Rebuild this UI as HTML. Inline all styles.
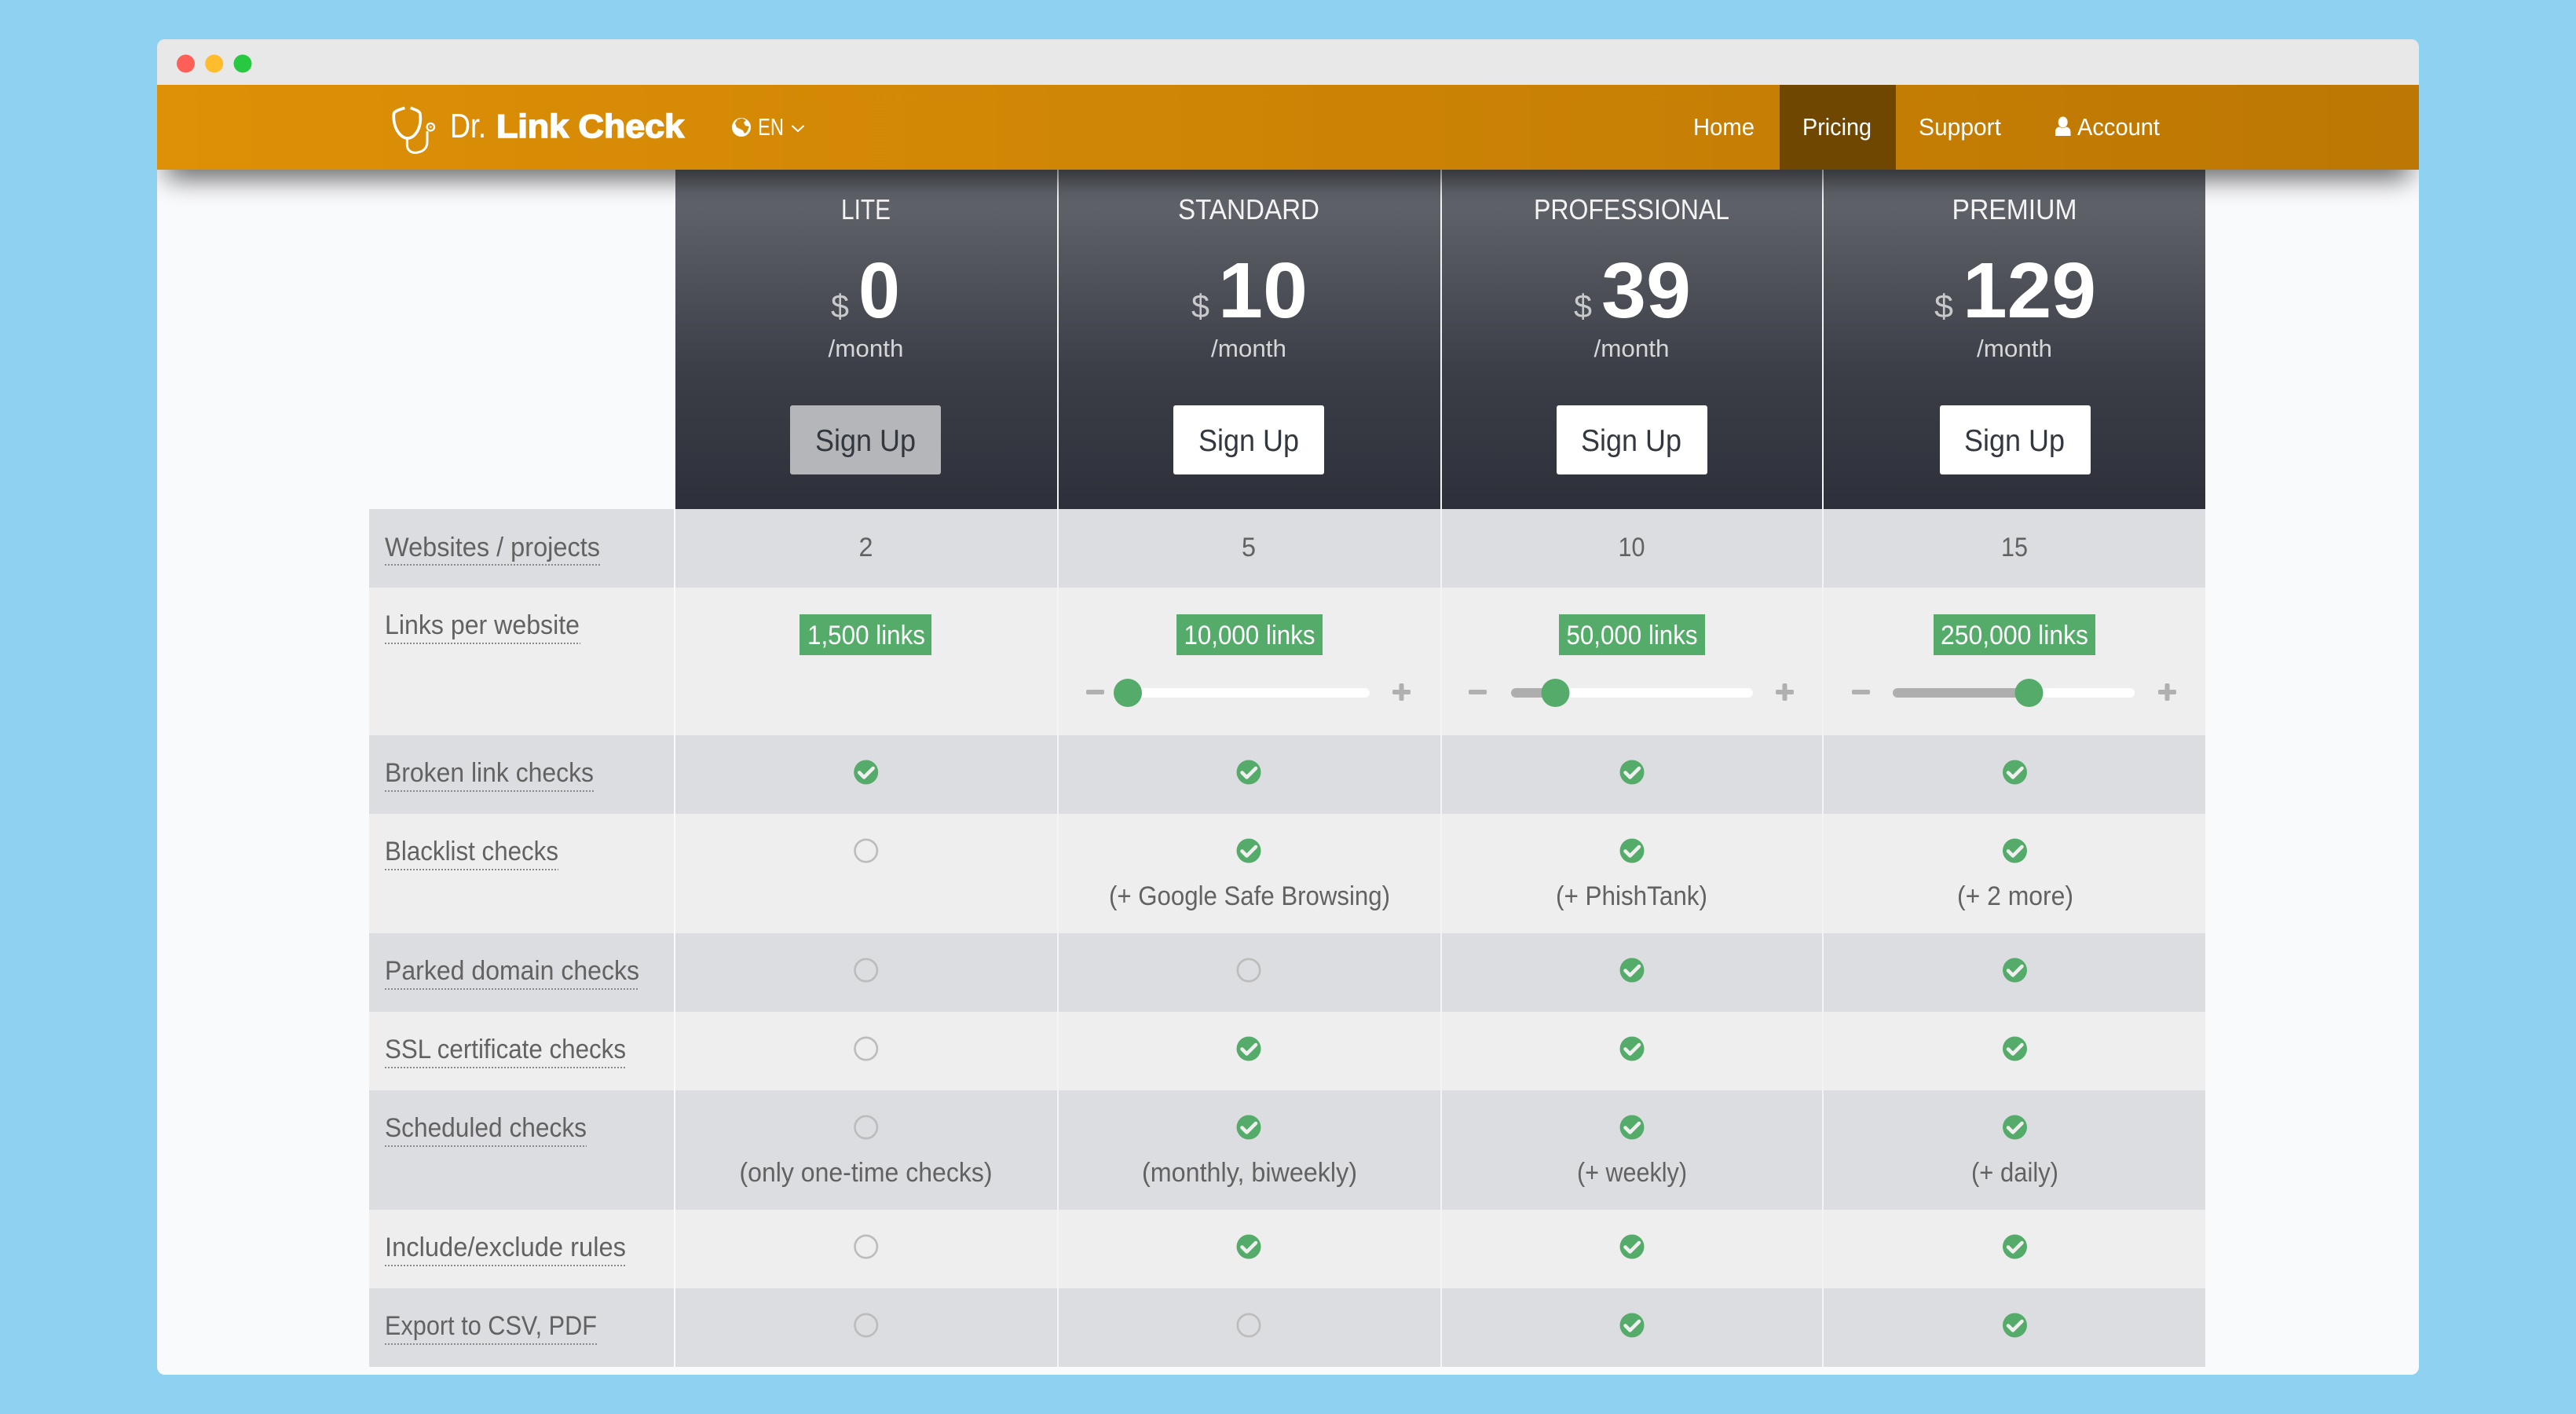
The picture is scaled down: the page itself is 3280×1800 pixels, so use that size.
<!DOCTYPE html>
<html><head><meta charset="utf-8"><title>Dr. Link Check Pricing</title>
<style>
html,body{margin:0;padding:0;background:#8fd1f1;width:3280px;height:1800px;overflow:hidden}
svg{display:block}
text{font-family:"Liberation Sans",Arial,sans-serif}
.l{font-size:34px;fill:#626262}
.v{font-size:34px;fill:#626262;text-anchor:middle}
.h{font-size:36px;fill:#f4f4f5;text-anchor:middle}
.p{font-size:100px;font-weight:bold;fill:#fff}
.d{font-size:42px;fill:#c8c9cb}
.m{font-size:31px;fill:#d5d6d8;text-anchor:middle}
.b{font-size:39px;fill:#33373f;text-anchor:middle}
.g{font-size:34px;fill:#fff;text-anchor:middle}
.n{font-size:31px;fill:#fff}
.u{stroke:#8a8a8a;stroke-width:2;stroke-dasharray:2 2}
</style></head><body>
<svg xmlns="http://www.w3.org/2000/svg" width="3280" height="1800" viewBox="0 0 3280 1800">
<defs>
<linearGradient id="nav" x1="0" x2="1" y1="0" y2="0"><stop offset="0" stop-color="#de9006"/><stop offset="1" stop-color="#bc7704"/></linearGradient>
<linearGradient id="hd" x1="0" x2="0" y1="0" y2="1"><stop offset="0" stop-color="#62666d"/><stop offset="0.1" stop-color="#5f6269"/><stop offset="0.6" stop-color="#3c3e47"/><stop offset="1" stop-color="#2d2f3a"/></linearGradient>
<clipPath id="win"><rect x="200" y="50" width="2880" height="1700" rx="10"/></clipPath>
<filter id="bl" x="-5%" y="-300%" width="110%" height="700%"><feGaussianBlur stdDeviation="17"/></filter>
<g id="ck"><circle r="15.5" fill="#55ab69"/><path d="M-8.500 0.500L-2.500 6.500L9 -5" fill="none" stroke="#f0f0f0" stroke-width="4.500" stroke-linecap="round" stroke-linejoin="round"/></g>
<g id="em"><circle r="14.200" fill="none" stroke="#bcbcbc" stroke-width="2.600"/></g>
</defs>

<g clip-path="url(#win)">
<rect x="200" y="50" width="2880" height="1700" fill="#f9fafc"/>
<rect x="200" y="50" width="2880" height="58" fill="#e8e8e8"/>

<!-- header columns -->
<rect x="860" y="216" width="1948" height="432" fill="url(#hd)"/>

<!-- rows -->
<rect x="470" y="648" width="2338" height="100" fill="#dcdde0"/>
<rect x="470" y="748" width="2338" height="188" fill="#eeeeee"/>
<rect x="470" y="936" width="2338" height="100" fill="#dcdde0"/>
<rect x="470" y="1036" width="2338" height="152" fill="#eeeeee"/>
<rect x="470" y="1188" width="2338" height="100" fill="#dcdde0"/>
<rect x="470" y="1288" width="2338" height="100" fill="#eeeeee"/>
<rect x="470" y="1388" width="2338" height="152" fill="#dcdde0"/>
<rect x="470" y="1540" width="2338" height="100" fill="#eeeeee"/>
<rect x="470" y="1640" width="2338" height="100" fill="#dcdde0"/>

<!-- separators -->
<rect x="858" y="648" width="2" height="1092" fill="#fafafa"/>
<rect x="1346" y="216" width="2" height="1524" fill="#f4f4f5"/>
<rect x="1834" y="216" width="2" height="1524" fill="#f4f4f5"/>
<rect x="2320" y="216" width="2" height="1524" fill="#f4f4f5"/>

<!-- header text -->
<text class="h" x="1102.500" y="279" textLength="63" lengthAdjust="spacingAndGlyphs">LITE</text>
<text class="h" x="1590" y="279" textLength="180" lengthAdjust="spacingAndGlyphs">STANDARD</text>
<text class="h" x="2077.500" y="279" textLength="249" lengthAdjust="spacingAndGlyphs">PROFESSIONAL</text>
<text class="h" x="2565" y="279" textLength="159" lengthAdjust="spacingAndGlyphs">PREMIUM</text>

<text class="d" x="1058" y="404" textLength="23" lengthAdjust="spacingAndGlyphs">$</text>
<text class="p" x="1093" y="404" textLength="53" lengthAdjust="spacingAndGlyphs">0</text>
<text class="d" x="1517" y="404" textLength="23" lengthAdjust="spacingAndGlyphs">$</text>
<text class="p" x="1551" y="404" textLength="114" lengthAdjust="spacingAndGlyphs">10</text>
<text class="d" x="2004" y="404" textLength="23" lengthAdjust="spacingAndGlyphs">$</text>
<text class="p" x="2039" y="404" textLength="114" lengthAdjust="spacingAndGlyphs">39</text>
<text class="d" x="2463" y="404" textLength="24" lengthAdjust="spacingAndGlyphs">$</text>
<text class="p" x="2499" y="404" textLength="170" lengthAdjust="spacingAndGlyphs">129</text>

<text class="m" x="1102.500" y="454" textLength="96" lengthAdjust="spacingAndGlyphs">/month</text>
<text class="m" x="1590" y="454" textLength="96" lengthAdjust="spacingAndGlyphs">/month</text>
<text class="m" x="2077.500" y="454" textLength="96" lengthAdjust="spacingAndGlyphs">/month</text>
<text class="m" x="2565" y="454" textLength="96" lengthAdjust="spacingAndGlyphs">/month</text>

<rect x="1006" y="516" width="192" height="88" rx="3" fill="#b5b6ba"/>
<rect x="1494" y="516" width="192" height="88" rx="3" fill="#fff"/>
<rect x="1982" y="516" width="192" height="88" rx="3" fill="#fff"/>
<rect x="2470" y="516" width="192" height="88" rx="3" fill="#fff"/>
<text class="b" x="1102" y="574" textLength="128" lengthAdjust="spacingAndGlyphs">Sign Up</text>
<text class="b" x="1590" y="574" textLength="128" lengthAdjust="spacingAndGlyphs">Sign Up</text>
<text class="b" x="2077" y="574" textLength="128" lengthAdjust="spacingAndGlyphs">Sign Up</text>
<text class="b" x="2565" y="574" textLength="128" lengthAdjust="spacingAndGlyphs">Sign Up</text>

<!-- row labels -->
<text class="l" x="490" y="708" textLength="274" lengthAdjust="spacingAndGlyphs">Websites / projects</text>
<line class="u" x1="490" x2="764" y1="719" y2="719"/>
<text class="l" x="490" y="807" textLength="248" lengthAdjust="spacingAndGlyphs">Links per website</text>
<line class="u" x1="490" x2="739" y1="819" y2="819"/>
<text class="l" x="490" y="995" textLength="266" lengthAdjust="spacingAndGlyphs">Broken link checks</text>
<line class="u" x1="490" x2="756" y1="1007" y2="1007"/>
<text class="l" x="490" y="1095" textLength="221" lengthAdjust="spacingAndGlyphs">Blacklist checks</text>
<line class="u" x1="490" x2="711" y1="1107" y2="1107"/>
<text class="l" x="490" y="1247" textLength="324" lengthAdjust="spacingAndGlyphs">Parked domain checks</text>
<line class="u" x1="490" x2="814" y1="1259" y2="1259"/>
<text class="l" x="490" y="1347" textLength="307" lengthAdjust="spacingAndGlyphs">SSL certificate checks</text>
<line class="u" x1="490" x2="797" y1="1359" y2="1359"/>
<text class="l" x="490" y="1447" textLength="257" lengthAdjust="spacingAndGlyphs">Scheduled checks</text>
<line class="u" x1="490" x2="747" y1="1459" y2="1459"/>
<text class="l" x="490" y="1599" textLength="307" lengthAdjust="spacingAndGlyphs">Include/exclude rules</text>
<line class="u" x1="490" x2="797" y1="1611" y2="1611"/>
<text class="l" x="490" y="1699" textLength="270" lengthAdjust="spacingAndGlyphs">Export to CSV, PDF</text>
<line class="u" x1="490" x2="760" y1="1711" y2="1711"/>

<!-- row 1 -->
<text class="v" x="1102.500" y="708" textLength="18" lengthAdjust="spacingAndGlyphs">2</text>
<text class="v" x="1590" y="708" textLength="18" lengthAdjust="spacingAndGlyphs">5</text>
<text class="v" x="2077.500" y="708" textLength="34" lengthAdjust="spacingAndGlyphs">10</text>
<text class="v" x="2565" y="708" textLength="34" lengthAdjust="spacingAndGlyphs">15</text>

<!-- row 2 badges -->
<rect x="1018" y="782" width="168" height="52" fill="#55ab69"/>
<rect x="1498" y="782" width="186" height="52" fill="#55ab69"/>
<rect x="1985" y="782" width="186" height="52" fill="#55ab69"/>
<rect x="2462" y="782" width="206" height="52" fill="#55ab69"/>
<text class="g" x="1103" y="820" textLength="150" lengthAdjust="spacingAndGlyphs">1,500 links</text>
<text class="g" x="1591" y="820" textLength="167" lengthAdjust="spacingAndGlyphs">10,000 links</text>
<text class="g" x="2078" y="820" textLength="167" lengthAdjust="spacingAndGlyphs">50,000 links</text>
<text class="g" x="2565" y="820" textLength="188" lengthAdjust="spacingAndGlyphs">250,000 links</text>

<!-- sliders -->
<g fill="#b0b0b0">
<rect x="1383" y="878" width="23" height="6" rx="2"/><rect x="1773" y="878" width="23" height="6" rx="2"/><rect x="1781.500" y="870" width="6" height="22" rx="2"/>
<rect x="1870" y="878" width="23" height="6" rx="2"/><rect x="2261" y="878" width="23" height="6" rx="2"/><rect x="2269.500" y="870" width="6" height="22" rx="2"/>
<rect x="2358" y="878" width="23" height="6" rx="2"/><rect x="2748" y="878" width="23" height="6" rx="2"/><rect x="2756.500" y="870" width="6" height="22" rx="2"/>
</g>
<rect x="1436" y="876" width="308" height="12" rx="6" fill="#fff"/>
<rect x="1924" y="876" width="308" height="12" rx="6" fill="#fff"/>
<rect x="2410" y="876" width="308" height="12" rx="6" fill="#fff"/>
<rect x="1924" y="876" width="58" height="12" rx="6" fill="#aeaeae"/>
<rect x="2410" y="876" width="174" height="12" rx="6" fill="#aeaeae"/>
<circle cx="1436" cy="882" r="18" fill="#55ab69"/>
<circle cx="1980.500" cy="882" r="18" fill="#55ab69"/>
<circle cx="2583.500" cy="882" r="18" fill="#55ab69"/>

<!-- icons -->
<use href="#ck" x="1102.700" y="983"/><use href="#ck" x="1590" y="983"/><use href="#ck" x="2078" y="983"/><use href="#ck" x="2565.500" y="983"/>
<use href="#em" x="1102.700" y="1083"/><use href="#ck" x="1590" y="1083"/><use href="#ck" x="2078" y="1083"/><use href="#ck" x="2565.500" y="1083"/>
<use href="#em" x="1102.700" y="1235"/><use href="#em" x="1590" y="1235"/><use href="#ck" x="2078" y="1235"/><use href="#ck" x="2565.500" y="1235"/>
<use href="#em" x="1102.700" y="1335"/><use href="#ck" x="1590" y="1335"/><use href="#ck" x="2078" y="1335"/><use href="#ck" x="2565.500" y="1335"/>
<use href="#em" x="1102.700" y="1435"/><use href="#ck" x="1590" y="1435"/><use href="#ck" x="2078" y="1435"/><use href="#ck" x="2565.500" y="1435"/>
<use href="#em" x="1102.700" y="1587"/><use href="#ck" x="1590" y="1587"/><use href="#ck" x="2078" y="1587"/><use href="#ck" x="2565.500" y="1587"/>
<use href="#em" x="1102.700" y="1687"/><use href="#em" x="1590" y="1687"/><use href="#ck" x="2078" y="1687"/><use href="#ck" x="2565.500" y="1687"/>

<!-- sub notes -->
<text class="v" x="1591" y="1152" textLength="358" lengthAdjust="spacingAndGlyphs">(+ Google Safe Browsing)</text>
<text class="v" x="2077.500" y="1152" textLength="193" lengthAdjust="spacingAndGlyphs">(+ PhishTank)</text>
<text class="v" x="2566" y="1152" textLength="148" lengthAdjust="spacingAndGlyphs">(+ 2 more)</text>
<text class="v" x="1102.500" y="1504" textLength="322" lengthAdjust="spacingAndGlyphs">(only one-time checks)</text>
<text class="v" x="1591" y="1504" textLength="274" lengthAdjust="spacingAndGlyphs">(monthly, biweekly)</text>
<text class="v" x="2078" y="1504" textLength="140" lengthAdjust="spacingAndGlyphs">(+ weekly)</text>
<text class="v" x="2565.500" y="1504" textLength="111" lengthAdjust="spacingAndGlyphs">(+ daily)</text>

<!-- nav shadow -->
<rect x="212" y="190" width="2856" height="36" fill="#000" opacity="0.66" filter="url(#bl)"/>

<!-- nav -->
<rect x="200" y="108" width="2880" height="108" fill="url(#nav)"/>
<rect x="2266" y="108" width="148" height="108" fill="#6f4700"/>

<!-- traffic lights -->
<circle cx="236.500" cy="81" r="11.500" fill="#ff5f57"/>
<circle cx="272.700" cy="81" r="11.500" fill="#ffbd2e"/>
<circle cx="309" cy="81" r="11.500" fill="#28c840"/>

<!-- logo -->
<g transform="translate(490 125) scale(.3333)" fill="none" stroke="#fff">
<path d="M76 37C58 43 42 47 35 57C31 82 38 115 55 135C65 147 76 153 86 153C98 153 112 146 122 130C135 110 139 80 134 57C128 47 114 43 98 37" stroke-width="11"/>
<path d="M85 153V178C85 198 100 210 120 208C145 205 161 194 162 168V126" stroke-width="9"/>
<circle cx="175" cy="110" r="14" stroke-width="7"/>
<circle cx="175" cy="110" r="5" fill="#fff" stroke="none" opacity=".6"/>
</g>
<text x="573" y="175" font-size="44" fill="#fff" textLength="46" lengthAdjust="spacingAndGlyphs">Dr.</text>
<text x="632" y="175" font-size="42" font-weight="bold" fill="#fff" stroke="#fff" stroke-width="1.600" textLength="239" lengthAdjust="spacingAndGlyphs">Link Check</text>

<!-- globe -->
<circle cx="944" cy="162" r="12" fill="#fff"/>
<path d="M939 152L945 150.500L950 153L947 156L949 160L954 161L951 168L948 170L946 166L942 164L938 162L936 157Z" fill="#d68b08"/>
<text class="n" x="965" y="172" textLength="33" lengthAdjust="spacingAndGlyphs">EN</text>
<path d="M1008.500 160L1016 167L1023.500 160" fill="none" stroke="#fff" stroke-width="2"/>

<!-- nav links -->
<text class="n" x="2156" y="172" textLength="78" lengthAdjust="spacingAndGlyphs">Home</text>
<text class="n" x="2295" y="172" textLength="88" lengthAdjust="spacingAndGlyphs">Pricing</text>
<text class="n" x="2443" y="172" textLength="105" lengthAdjust="spacingAndGlyphs">Support</text>
<ellipse cx="2626.700" cy="155.500" rx="6" ry="7" fill="#fff"/>
<path d="M2617 173V168C2617 164 2619 162 2622 161.500C2625 163.500 2628 163.500 2631 161.500C2634 162 2636.500 164 2636.500 168V173Z" fill="#fff"/>
<text class="n" x="2645" y="172" textLength="105" lengthAdjust="spacingAndGlyphs">Account</text>
</g>
</svg>
</body></html>
